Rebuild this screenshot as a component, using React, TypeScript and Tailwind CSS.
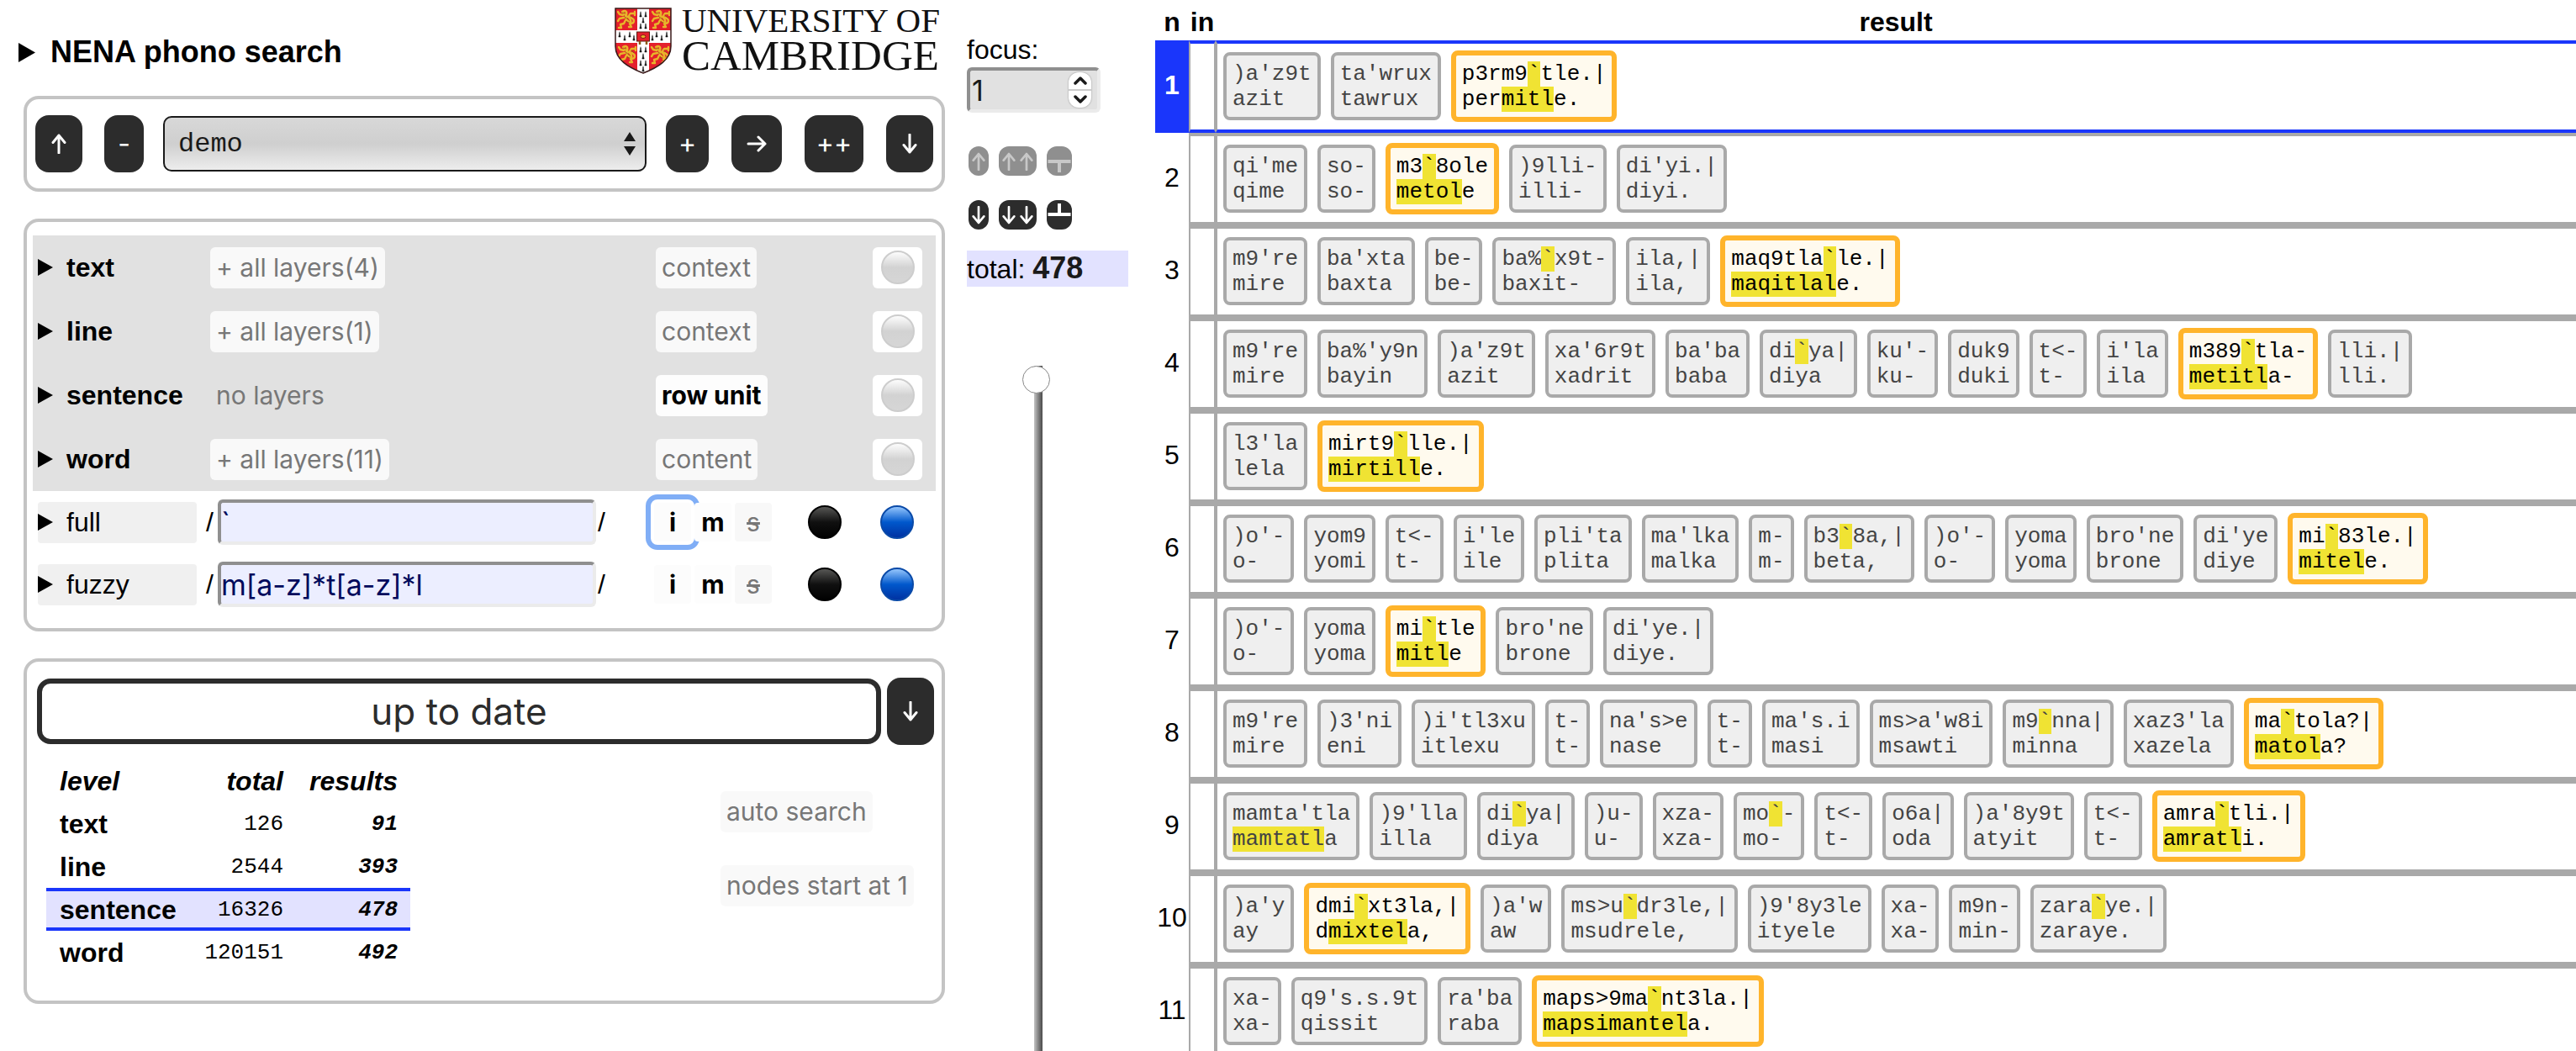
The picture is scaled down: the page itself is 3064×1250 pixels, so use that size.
import React from "react";

const sans = "font-['Liberation_Sans',Arial,sans-serif]";
const ui = "font-['Inter',sans-serif]";
const mono = "font-['Liberation_Mono','Courier_New',monospace]";

/* Words are "transcription~plain"; square brackets mark a hit, a leading * marks a full match. */
const rows: string[][] = [
  [")a'z9t~azit", "ta'wrux~tawrux", "*p3rm9[`]tle.|~per[mitl]e."],
  ["qi'me~qime", "so-~so-", "*m3[`]8ole~[metol]e", ")9lli-~illi-", "di'yi.|~diyi."],
  ["m9're~mire", "ba'xta~baxta", "be-~be-", "ba%[`]x9t-~baxit-", "ila,|~ila,", "*maq9tla[`]le.|~[maqitlal]e."],
  ["m9're~mire", "ba%'y9n~bayin", ")a'z9t~azit", "xa'6r9t~xadrit", "ba'ba~baba", "di[`]ya|~diya", "ku'-~ku-", "duk9~duki", "t<-~t-", "i'la~ila", "*m389[`]tla-~[metitl]a-", "lli.|~lli."],
  ["l3'la~lela", "*mirt9[`]lle.|~[mirtill]e."],
  [")o'-~o-", "yom9~yomi", "t<-~t-", "i'le~ile", "pli'ta~plita", "ma'lka~malka", "m-~m-", "b3[`]8a,|~beta,", ")o'-~o-", "yoma~yoma", "bro'ne~brone", "di'ye~diye", "*mi[`]83le.|~[mitel]e."],
  [")o'-~o-", "yoma~yoma", "*mi[`]tle~[mitl]e", "bro'ne~brone", "di'ye.|~diye."],
  ["m9're~mire", ")3'ni~eni", ")i'tl3xu~itlexu", "t-~t-", "na's>e~nase", "t-~t-", "ma's.i~masi", "ms>a'w8i~msawti", "m9[`]nna|~minna", "xaz3'la~xazela", "*ma[`]tola?|~[matol]a?"],
  ["mamta'tla~[mamtatl]a", ")9'lla~illa", "di[`]ya|~diya", ")u-~u-", "xza-~xza-", "mo[`]-~mo-", "t<-~t-", "o6a|~oda", ")a'8y9t~atyit", "t<-~t-", "*amra[`]tli.|~[amratl]i."],
  [")a'y~ay", "*dmi[`]xt3la,|~d[mixtel]a,", ")a'w~aw", "ms>u[`]dr3le,|~msudrele,", ")9'8y3le~ityele", "xa-~xa-", "m9n-~min-", "zara[`]ye.|~zaraye."],
  ["xa-~xa-", "q9's.s.9t~qissit", "ra'ba~raba", "*maps>9ma[`]nt3la.|~[mapsimantel]a."],
];

function Marked({ text }: { text: string }) {
  return (
    <span className="block whitespace-pre">
      {text.split(/(\[[^\]]*\])/).map((p, i) =>
        p.startsWith("[") ? (
          <mark key={i} className="bg-[#f0e333] text-inherit">{p.slice(1, -1)}</mark>
        ) : (
          p
        ),
      )}
    </span>
  );
}

function Word({ spec }: { spec: string }) {
  const hit = spec.startsWith("*");
  const [a, b] = (hit ? spec.slice(1) : spec).split("~");
  return (
    <div
      className={
        "shrink-0 rounded-lg px-[7px] pt-[7px] pb-1.5 text-[26px] leading-[30px] " +
        (hit ? "border-6 border-[#ffb42b] bg-[#fffaee] text-black" : "border-4 border-[#a9a9a9] bg-[#efefef] text-[#444]")
      }
    >
      <Marked text={a} />
      <Marked text={b} />
    </div>
  );
}

function Triangle({ big = false }: { big?: boolean }) {
  return (
    <svg viewBox="0 0 18 20" preserveAspectRatio="none" className={big ? "h-[23px] w-5 shrink-0" : "h-5 w-[18px] shrink-0"} aria-hidden>
      <path d="M0 0 L18 10 L0 20 Z" fill="#000" />
    </svg>
  );
}

const arrowPaths = {
  up: "M10 23V2M3 10.5L10 2L17 10.5",
  down: "M10 1V22M3 13.5L10 22L17 13.5",
};

function Arrow({ dir, className }: { dir: "up" | "down"; className: string }) {
  return (
    <svg viewBox="0 0 20 24" className={className} fill="none" stroke="currentColor" strokeWidth="3" strokeLinecap="round" strokeLinejoin="round" aria-hidden>
      <path d={arrowPaths[dir]} />
    </svg>
  );
}

function DarkButton({ label, className, children }: { label: string; className: string; children: React.ReactNode }) {
  return (
    <button aria-label={label} className={"flex shrink-0 items-center justify-center rounded-2xl bg-[#2c2c2c] text-[32px] text-white " + ui + " " + className}>
      {children}
    </button>
  );
}

function SmallButton({ label, className, disabled, children }: { label: string; className: string; disabled?: boolean; children: React.ReactNode }) {
  return (
    <button
      aria-label={label}
      disabled={disabled}
      className={"flex h-[35px] items-center justify-center rounded-xl " + (disabled ? "bg-[#8f8f8f] text-[#c8c8c8] " : "bg-[#2c2c2c] text-white ") + className}
    >
      {children}
    </button>
  );
}

function Tee({ down }: { down?: boolean }) {
  return (
    <svg viewBox="0 0 30 35" className="h-[35px] w-[30px]" fill="none" stroke="currentColor" strokeWidth="4" aria-hidden>
      <path d={down ? "M1.500 18H28.500M15 18V31" : "M1.500 17H28.500M15 17V4"} />
    </svg>
  );
}

function Panel({ className, children }: { className: string; children: React.ReactNode }) {
  return <section className={"rounded-[18px] border-4 border-[#c4c4c4] " + className}>{children}</section>;
}

const pill = "h-[49px] justify-self-start rounded-md px-[7px] text-[30px] whitespace-nowrap " + ui;

function Ball({ color }: { color: "gray" | "black" | "blue" }) {
  const stops = {
    gray: ["#ffffff", "#d2d2d2", "#d6d6d6", "#cdcdcd"],
    black: ["#5a5a58", "#101010", "#000000", "#000000"],
    blue: ["#9ccbff", "#0058cc", "#0030a0", "#0a4aa8"],
  }[color];
  return (
    <svg viewBox="0 0 40 40" className="size-10" aria-hidden>
      <defs>
        <linearGradient id={"ball-" + color} x1="0" y1="0" x2="0" y2="1">
          <stop offset="0" stopColor={stops[0]} />
          <stop offset="0.5" stopColor={stops[1]} />
          <stop offset="1" stopColor={stops[2]} />
        </linearGradient>
      </defs>
      <circle cx="20" cy="20" r="19" fill={"url(#ball-" + color + ")"} stroke={stops[3]} strokeWidth="2" />
    </svg>
  );
}

const levels = [
  { name: "text", layers: "+ all layers(4)", mode: "context" },
  { name: "line", layers: "+ all layers(1)", mode: "context" },
  { name: "sentence", layers: "", mode: "row unit" },
  { name: "word", layers: "+ all layers(11)", mode: "content" },
];

function LevelRow({ name, layers, mode }: { name: string; layers: string; mode: string }) {
  return (
    <div className="grid h-[76px] grid-cols-[205px_minmax(0,1fr)_258px_75px] items-center pl-1.5">
      <button className="flex items-center gap-4 text-[32px] font-bold">
        <Triangle />
        {name}
      </button>
      {layers ? (
        <button className={pill + " bg-[#f9f9f9] text-[#777]"}>{layers}</button>
      ) : (
        <span className={pill + " leading-[49px] text-[#777]"}>no layers</span>
      )}
      <button className={pill + (mode === "row unit" ? " bg-[#fdfdfd] font-bold text-black" : " bg-[#f9f9f9] text-[#777]")}>{mode}</button>
      <button aria-label={name + " colour"} className="flex h-[49px] w-[59px] items-center justify-center rounded-md bg-white">
        <Ball color="gray" />
      </button>
    </div>
  );
}

function PatternRow({ name, value, focused }: { name: string; value: string; focused?: boolean }) {
  const flag = "relative h-[46px] w-11 rounded text-[30px] " + ui;
  return (
    <div className="grid h-[74px] grid-cols-[200px_minmax(0,1fr)_183px_86px_66px] items-center pl-1.5">
      <button className="flex h-[49px] w-[189px] items-center gap-4 rounded bg-[#f0f0f0] text-[32px]">
        <Triangle />
        {name}
      </button>
      <label className="flex items-center pr-[58px] text-[32px]">
        <span className="w-3.5">/</span>
        <input
          aria-label={name + " pattern"}
          defaultValue={value}
          className={"h-[54px] min-w-0 flex-1 rounded-md border-4 border-t-[#8f8f8f] border-r-[#ebebeb] border-b-[#ebebeb] border-l-[#8f8f8f] bg-[#eceeff] text-[34px] text-[#000a5c] outline-none " + ui}
        />
        <span className="pl-0.5">/</span>
      </label>
      <div className="flex gap-1">
        <button className={flag + " bg-[#fcfcfc] font-bold" + (focused ? " outline-6 outline-offset-4 outline-[#80aef6]" : "")}>i</button>
        <button className={flag + " bg-[#fdfdfd] font-bold"}>m</button>
        <button className={flag + " bg-[#f8f8f8] text-[#777] line-through"}>s</button>
      </div>
      <button aria-label={name + " text colour"} className="size-10"><Ball color="black" /></button>
      <button aria-label={name + " highlight colour"} className="size-10"><Ball color="blue" /></button>
    </div>
  );
}

function Lion({ x, y }: { x: number; y: number }) {
  return (
    <g transform={`translate(${x} ${y})`} fill="none" stroke="#e8b52a" strokeLinecap="round" strokeLinejoin="round">
      <g strokeWidth="2.400">
        <path d="M7 5q3-2 5 0q1 3-1 5q5 1 6 5q1 3-1 4l2 4h-3" />
        <path d="M8 9l-4-1l-2-3M9 12l-5 1l-2 3M11 15l-2 4l-4 1l1 4h-3" />
        <path d="M16 19q5 0 5-3t-4-4t0-5h4M22 5v4" />
        <path d="M8 6l3 3l1 5l3 3" />
      </g>
      <path d="M7 6l3 1M10 11l4 3M12 17l3 1M17 9l3 3" stroke="#8a5a14" strokeWidth="0.800" />
    </g>
  );
}

function Ermine({ x, y }: { x: number; y: number }) {
  return <path d={`M${x} ${y}l1.200 5h-2.400zM${x - 1} ${y}h2M${x} ${y - 1.5}v2`} fill="#111" stroke="#111" strokeWidth="0.500" />;
}

function Shield() {
  const shape = "M1 1H67V46C67 62 52 71 34 78C16 71 1 62 1 46Z";
  const ermines = [
    [31, 6], [37, 6], [34, 13], [31, 20], [37, 20], [6, 30], [12, 34], [18, 30], [23, 34], [45, 34], [50, 30], [56, 34], [62, 30],
    [31, 48], [37, 48], [34, 56], [31, 64], [37, 64], [34, 71],
  ];
  return (
    <svg viewBox="0 0 68 79" className="h-[79px] w-[68px]" role="img" aria-label="Coat of arms">
      <clipPath id="shield"><path d={shape} /></clipPath>
      <g clipPath="url(#shield)">
        <rect width="68" height="79" fill="#e4202c" />
        <rect x="27" width="14" height="79" fill="#fff" />
        <rect y="27" width="68" height="15" fill="#fff" />
        {ermines.map(([x, y], i) => <Ermine key={i} x={x} y={y} />)}
        <Lion x={2} y={0} />
        <Lion x={43} y={0} />
        <Lion x={3} y={42} />
        <Lion x={42} y={42} />
        <rect x="26.500" y="29" width="15" height="11" fill="#e4202c" stroke="#5a1a10" />
        <ellipse cx="34" cy="34.500" rx="3" ry="2" fill="#e8b52a" stroke="#8a1a14" />
        <path d="M30 40v4M38 40v4" stroke="#8a5a14" strokeWidth="2.500" />
      </g>
      <path d={shape} fill="none" stroke="#3a1a1a" strokeWidth="1.500" />
    </svg>
  );
}

const stats = [
  ["text", "126", "91"],
  ["line", "2544", "393"],
  ["sentence", "16326", "478"],
  ["word", "120151", "492"],
];

export default function App() {
  return (
    <div className={"grid h-screen grid-cols-[1124fr_250fr_1690fr] overflow-hidden bg-white text-black " + sans}>
      <main className="min-w-0 pl-7">
        <header className="flex h-[114px] items-start justify-between pr-1.5">
          <h1 className="-ml-1.5 flex items-center gap-[18px] pt-[41px] text-[36px] leading-[42px] font-bold whitespace-nowrap">
            <Triangle big />
            NENA phono search
          </h1>
          <a href="#cambridge" className="flex gap-3 pt-[9px] font-['Liberation_Serif','Times_New_Roman',serif] text-[#111]">
            <Shield />
            <span className="flex flex-col whitespace-nowrap">
              <span className="text-[41px] leading-[30px]">UNIVERSITY OF</span>
              <span className="text-[51px] leading-[54px]">CAMBRIDGE</span>
            </span>
          </a>
        </header>

        <Panel className="flex items-center px-[10px] pt-[19px] pb-[19px]">
          <DarkButton label="Up" className="h-[68px] w-14"><Arrow dir="up" className="h-6 w-5" /></DarkButton>
          <DarkButton label="Delete" className="ml-[26px] h-[68px] w-[47px]">-</DarkButton>
          <select
            aria-label="Search name"
            className={"mx-[23px] h-[66px] min-w-0 flex-1 appearance-none rounded-[10px] border-2 border-[#1a1a1a] bg-linear-to-b from-[#d8d8d8] via-[#cfcfcf] to-[#ededed] px-4 pt-0.5 text-[32px] text-[#1a1a1a] " + mono}
          >
            <option>demo</option>
          </select>
          <svg viewBox="0 0 14 28" className="pointer-events-none relative -ml-[50px] mr-9 h-7 w-3.5" aria-hidden>
            <path d="M7 0L14 11H0ZM7 28L14 17H0Z" fill="#1a1a1a" />
          </svg>
          <DarkButton label="Add" className="h-[68px] w-[51px]">+</DarkButton>
          <DarkButton label="Rename" className="ml-[27px] h-[68px] w-[60px]">
            <svg viewBox="0 0 24 20" className="h-5 w-6" fill="none" stroke="currentColor" strokeWidth="3" strokeLinecap="round" strokeLinejoin="round" aria-hidden>
              <path d="M2 10H22M14 2L22 10L14 18" />
            </svg>
          </DarkButton>
          <DarkButton label="Duplicate" className="ml-[27px] h-[68px] w-[70px]">++</DarkButton>
          <DarkButton label="Down" className="ml-[27px] h-[68px] w-14"><Arrow dir="down" className="h-6 w-5" /></DarkButton>
        </Panel>

        <Panel className="mt-8 px-[7px] pt-4 pb-[15px]">
          <div className="bg-[#e1e1e1]">
            {levels.map((l) => <LevelRow key={l.name} {...l} />)}
          </div>
          <PatternRow name="full" value="`" focused />
          <PatternRow name="fuzzy" value="m[a-z]*t[a-z]*l" />
        </Panel>

        <Panel className="mt-8 pt-[19px] pr-[9px] pb-8 pl-3">
          <div className="flex items-center gap-[7px]">
            <button className={"h-[78px] flex-1 rounded-2xl border-6 border-[#2c2c2c] text-[44px] leading-[60px] text-[#2c2c2c] " + ui}>up to date</button>
            <DarkButton label="Export" className="h-20 w-14"><Arrow dir="down" className="h-6 w-5" /></DarkButton>
          </div>
          <div className="mt-[18px] flex items-start justify-between pr-1 pl-[11px]">
            <table className="border-separate border-spacing-0 text-[32px] leading-[42px]">
              <thead>
                <tr className="italic">
                  <th className="w-[170px] border-y-4 border-transparent pl-4 text-left">level</th>
                  <th className="w-[127px] border-y-4 border-transparent pr-[15px] text-right">total</th>
                  <th className="w-[136px] border-y-4 border-transparent pr-[15px] text-right">results</th>
                </tr>
              </thead>
              <tbody>
                {stats.map(([name, total, results]) => {
                  const c = name === "sentence" ? "border-y-4 border-[#1a36fb] bg-[#e2e2ff] " : "border-y-4 border-transparent ";
                  return (
                    <tr key={name}>
                      <th scope="row" className={c + "pt-px pl-4 text-left"}>{name}</th>
                      <td className={c + "pt-px pr-[15px] text-right text-[26px] " + mono}>{total}</td>
                      <td className={c + "pt-px pr-[15px] text-right text-[26px] font-bold italic " + mono}>{results}</td>
                    </tr>
                  );
                })}
              </tbody>
            </table>
            <div className="mt-[37px] flex w-[250px] flex-col items-start gap-[39px]">
              <button className={pill + " bg-[#f9f9f9] text-[#777]"}>auto search</button>
              <button className={pill + " bg-[#f9f9f9] text-[#777]"}>nodes start at 1</button>
            </div>
          </div>
        </Panel>
      </main>

      <aside className="flex min-h-0 flex-col pt-[39px] pl-[26px]">
        <label htmlFor="focus" className="text-[32px] leading-[41px]">focus:</label>
        <div className="flex h-[54px] w-[159px] items-center justify-between rounded-md border-4 border-t-[#8f8f8f] border-r-[#ebebeb] border-b-[#ebebeb] border-l-[#8f8f8f] bg-[#e1e1e1] pr-[7px] pl-0.5">
          <input id="focus" defaultValue="1" className={"w-20 bg-transparent text-[34px] text-[#1a1a1a] outline-none " + ui} />
          <span className="flex h-[42px] w-[27px] flex-col divide-y-2 divide-[#ccc] rounded-xl bg-white shadow-[0_0_2px_#888]">
            {["M2 8L8 2L14 8", "M2 2L8 8L14 2"].map((d, i) => (
              <button key={d} aria-label={i ? "Decrease" : "Increase"} className="flex flex-1 items-center justify-center">
                <svg viewBox="0 0 16 10" className="h-2.5 w-4" fill="none" stroke="#1a1a1a" strokeWidth="3.500" strokeLinecap="round" strokeLinejoin="round" aria-hidden><path d={d} /></svg>
              </button>
            ))}
          </span>
        </div>
        <div className="mt-10 flex gap-3 pl-0.5">
          <SmallButton label="Previous" disabled className="w-6"><Arrow dir="up" className="h-[22px] w-[18px]" /></SmallButton>
          <SmallButton label="Back ten" disabled className="w-[45px] gap-[3px]"><Arrow dir="up" className="h-[22px] w-[18px]" /><Arrow dir="up" className="h-[22px] w-[18px]" /></SmallButton>
          <SmallButton label="First" disabled className="w-[30px]"><Tee down /></SmallButton>
        </div>
        <div className="mt-[29px] flex gap-3 pl-0.5">
          <SmallButton label="Next" className="w-6"><Arrow dir="down" className="h-[22px] w-[18px]" /></SmallButton>
          <SmallButton label="Forward ten" className="w-[45px] gap-[3px]"><Arrow dir="down" className="h-[22px] w-[18px]" /><Arrow dir="down" className="h-[22px] w-[18px]" /></SmallButton>
          <SmallButton label="Last" className="w-[30px]"><Tee /></SmallButton>
        </div>
        <p className="mt-[25px] mr-8 bg-[#e2e2ff] text-[32px] leading-[42px]">
          total: <strong className="text-[36px] text-[#1a1a1a]">478</strong>
        </p>
        <input
          type="range"
          aria-label="Result position"
          min={1}
          max={478}
          defaultValue={1}
          className="mt-[94px] ml-[68px] min-h-0 w-[34px] flex-1 appearance-none bg-transparent [writing-mode:vertical-lr] [&::-webkit-slider-runnable-track]:w-2.5 [&::-webkit-slider-runnable-track]:bg-linear-to-r [&::-webkit-slider-runnable-track]:from-[#c4c4c4] [&::-webkit-slider-runnable-track]:to-[#4a4a4a] [&::-webkit-slider-thumb]:-ml-3.5 [&::-webkit-slider-thumb]:size-[33px] [&::-webkit-slider-thumb]:appearance-none [&::-webkit-slider-thumb]:rounded-full [&::-webkit-slider-thumb]:border [&::-webkit-slider-thumb]:border-[#888] [&::-webkit-slider-thumb]:bg-white"
        />
      </aside>

      <table className="w-full self-start border-separate border-spacing-0">
        <thead>
          <tr className="h-12 text-[32px]">
            <th className="w-10 pt-1 leading-[44px]">n</th>
            <th className="w-8 pt-1 leading-[44px]">in</th>
            <th className="pt-1 leading-[44px]">result</th>
          </tr>
        </thead>
        <tbody>
          {rows.map((words, i) => (
            <tr key={i} className={i === 0 ? "[&>td]:border-y-[#1a36fb]" : ""}>
              <th scope="row" className={i === 0 ? "bg-[#1a36fb] pb-1 text-[32px] text-white" : "pb-1 text-[32px] font-normal"}>{i + 1}</th>
              <td className="border-x-2 border-y-4 border-[#a9a9a9]" />
              <td className={"border-y-4 border-l-2 border-[#a9a9a9] " + mono}>
                <div className="flex h-[102px] items-center gap-3 pt-2 pb-[9px] pl-[7px]">
                  {words.map((w, j) => <Word key={j} spec={w} />)}
                </div>
              </td>
            </tr>
          ))}
        </tbody>
      </table>
    </div>
  );
}
